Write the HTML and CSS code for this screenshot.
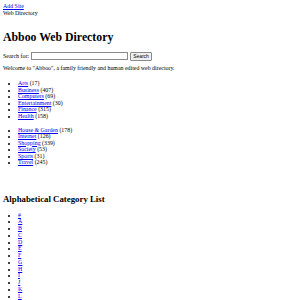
FILE: index.html
```html
<!DOCTYPE html>
<html>
    <head>
        <title>Abboo Web Directory</title>
        <link rel="stylesheet" href="styles.css">
    </head>
    <body>
        <div class="top">
            <a href="#">Add Site</a><br/>
            Web Directory
        </div>
        <h1>Abboo Web Directory</h1>
        <form class="search">
            <span>Search for:</span>
            <input type="text" class="query">
            <button type="button" class="go">Search</button>
        </form>
        <p>Welcome to "Abboo", a family friendly and human edited web directory.</p>
        <ul class="first">
            <li><a href="#">Arts</a> (17)</li>
            <li><a href="#">Business</a> (407)</li>
            <li><a href="#">Computers</a> (69)</li>
            <li><a href="#">Entertainment</a> (30)</li>
            <li><a href="#">Finance</a> (315)</li>
            <li><a href="#">Health</a> (158)</li>
        </ul>
        <ul>
            <li><a href="#">House &amp; Garden</a> (178)</li>
            <li><a href="#">Internet</a> (126)</li>
            <li><a href="#">Shopping</a> (339)</li>
            <li><a href="#">Society</a> (53)</li>
            <li><a href="#">Sports</a> (31)</li>
            <li><a href="#">Travel</a> (245)</li>
        </ul>
        <h2>Alphabetical Category List</h2>
        <ul class="letters">
            <li><a href="#">#</a></li>
            <li><a href="#">A</a></li>
            <li><a href="#">B</a></li>
            <li><a href="#">C</a></li>
            <li><a href="#">D</a></li>
            <li><a href="#">E</a></li>
            <li><a href="#">F</a></li>
            <li><a href="#">G</a></li>
            <li><a href="#">H</a></li>
            <li><a href="#">I</a></li>
            <li><a href="#">J</a></li>
            <li><a href="#">K</a></li>
            <li><a href="#">L</a></li>
        </ul>
    </body>
</html>
```

FILE: styles.css
```css
/* the page is drawn at about a third of normal size */
body {
    margin: 3px;
    font-family: "Liberation Serif", "Times New Roman", serif;
    font-size: 5.9px;
    line-height: 6.6px;
    color: black;
    background-color: white;
}
a {
    color: #0000ee;
}
.top {
    padding-bottom: 6.6px;
}
h1 {
    font-size: 11.8px;
    line-height: 13.6px;
    margin: 7.9px 0;
}
h2 {
    font-size: 8.8px;
    line-height: 10.3px;
    margin: 28px 0 7.2px 0;
}
.search {
    display: flex;
    align-items: center;
    gap: 2px;
    height: 8.4px;
}
.query {
    box-sizing: border-box;
    width: 97px;
    height: 8px;
    margin: 0;
    padding: 0;
    border: 1px solid #8a8a8a;
}
.go {
    box-sizing: border-box;
    width: 22px;
    height: 9px;
    margin: 0;
    padding: 0;
    font-family: "Liberation Sans", Arial, sans-serif;
    font-size: 4.9px;
    color: black;
    background-color: #efefef;
    border: 1px solid #8a8a8a;
    border-radius: 1px;
}
p {
    margin: 4.8px 0 0 0;
}
ul {
    margin: 7px 0;
    padding-left: 15px;
}
.first {
    margin-top: 8px;
}
.letters {
    line-height: 6.75px;
}
```
